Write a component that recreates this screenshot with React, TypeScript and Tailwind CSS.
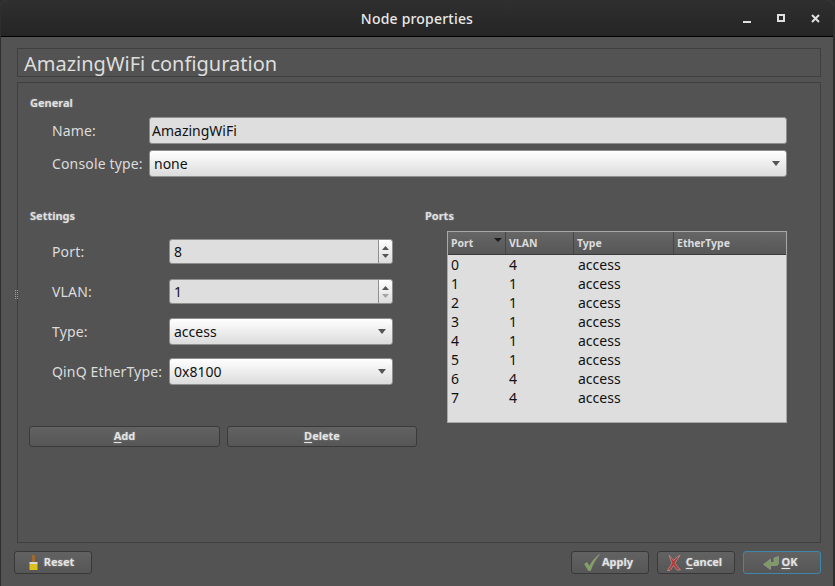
import React from 'react';

const fieldClass = 'flex items-center rounded-[3px] border border-[#8f8f8f] text-[14px] text-[#111]';

function Caret() {
  return (
    <svg width="8" height="5" viewBox="0 0 8 5" className="shrink-0">
      <path d="M0 0h8L4 5z" fill="#555555" />
    </svg>
  );
}

function Combo({ value, className }: { value: string; className: string }) {
  return (
    <div className={`${fieldClass} justify-between bg-gradient-to-b from-white to-[#dcdcdc] pl-[4px] pr-[6px] ${className}`}>
      <span>{value}</span>
      <Caret />
    </div>
  );
}

function Spin({ value, downDisabled }: { value: string; downDisabled?: boolean }) {
  return (
    <div className={`${fieldClass} h-[25px] w-[224px] bg-[#dedede] pl-[4px]`}>
      <span className="flex-1">{value}</span>
      <div className="flex h-full w-[14px] flex-col items-center justify-center gap-[4px] rounded-r-[3px] border-l border-[#8f8f8f] bg-gradient-to-b from-white to-[#dcdcdc]">
        <svg width="7" height="4" viewBox="0 0 7 4"><path d="M3.5 0L7 4H0z" fill="#555555" /></svg>
        <svg width="7" height="4" viewBox="0 0 7 4"><path d="M0 0h7L3.5 4z" fill={downDisabled ? '#a5a5a5' : '#555555'} /></svg>
      </div>
    </div>
  );
}

function Key({ children }: { children: string }) {
  return <span className="underline underline-offset-2">{children}</span>;
}

const btnText = 'text-[11px] font-bold text-[#e4e4e4] [text-shadow:0_0_2px_rgba(255,255,255,0.35)]';

function FootButton({ children, className = 'border-[#383838]' }: { children: React.ReactNode; className?: string }) {
  return (
    <button className={`flex h-[23px] w-[78px] items-center justify-center gap-[2px] rounded-[3px] border bg-gradient-to-b from-[#626262] to-[#565656] pr-[3px] ${btnText} ${className}`}>
      {children}
    </button>
  );
}

const rows = [
  ['0', '4'],
  ['1', '1'],
  ['2', '1'],
  ['3', '1'],
  ['4', '1'],
  ['5', '1'],
  ['6', '4'],
  ['7', '4'],
];

const heading = 'text-[11px] font-bold leading-[14px] text-[#e0e0e0] [text-shadow:0_0_2px_rgba(255,255,255,0.35)]';
const label = 'text-[14px] tracking-[0.15px] text-[#dcdcdc]';
const headCell = 'flex h-full items-center border-r border-[#454545] pl-[3px] pt-[2px] text-[10.5px] font-bold text-[#dcdcdc]';

export default function App() {
  return (
    <div className="h-[586px] w-[835px] overflow-hidden bg-[#2e2e2e] font-['Noto_Sans','Open_Sans',sans-serif]">
      <div className="ml-px mr-[2px] flex h-[586px] flex-col rounded-t-[6px] bg-[#535353]">
        <div className="flex h-[37px] shrink-0 items-center rounded-t-[6px] border-b border-black bg-gradient-to-b from-[#2f2f2f] to-[#252525]">
          <div className="w-[96px]" />
          <div className="flex-1 text-center text-[14px] font-medium tracking-[0.2px] text-[#e8e8e8]">Node properties</div>
          <div className="flex w-[96px] items-center gap-[26px] pl-[6px]">
            <svg width="8" height="9" viewBox="0 0 8 9"><path d="M0 7h8v2H0z" fill="#e0e0e0" /></svg>
            <svg width="8" height="8" viewBox="0 0 8 8"><path d="M0 0h8v8H0zM2 2v4h4V2z" fill="#e0e0e0" fillRule="evenodd" /></svg>
            <svg width="9" height="9" viewBox="0 0 9 9"><path d="M1 1l7 7M8 1L1 8" stroke="#e0e0e0" strokeWidth="2" /></svg>
          </div>
        </div>

        <div className="relative flex flex-1 flex-col pl-[16px] pr-[12px] pt-[11px]">
          <div className="flex h-[29px] items-center border border-[#3f3f3f] pl-[6px] pt-[2px] text-[20px] text-[#dedede]">
            AmazingWiFi configuration
          </div>

          <div className="mt-[5px] h-[461px] border border-[#3f3f3f] pl-[11px] pt-[13px]">
            <div className={`${heading} pl-px`}>General</div>
            <div className="mt-[7px] flex flex-col gap-[6px] pl-px">
              <div className="flex items-center">
                <span className={`${label} w-[119px] pl-[22px]`}>Name:</span>
                <div className={`${fieldClass} h-[27px] w-[638px] bg-[#dedede] pl-[2px]`}>AmazingWiFi</div>
              </div>
              <div className="flex items-center">
                <span className={`${label} w-[119px] whitespace-nowrap pl-[22px]`}>Console type:</span>
                <Combo value="none" className="h-[27px] w-[638px]" />
              </div>
            </div>

            <div className="mt-[32px] flex">
              <div className="w-[396px] shrink-0">
                <div className={`${heading} pl-px`}>Settings</div>
                <div className="mt-[15px] flex flex-col pl-px">
                  <div className="flex items-center pt-px">
                    <span className={`${label} w-[139px] pl-[22px]`}>Port:</span>
                    <Spin value="8" />
                  </div>
                  <div className="mt-[15px] flex items-center">
                    <span className={`${label} w-[139px] pl-[22px]`}>VLAN:</span>
                    <Spin value="1" downDisabled />
                  </div>
                  <div className="mt-[14px] flex items-center">
                    <span className={`${label} w-[139px] pl-[22px]`}>Type:</span>
                    <Combo value="access" className="h-[27px] w-[224px]" />
                  </div>
                  <div className="mt-[13px] flex items-center">
                    <span className={`${label} w-[139px] whitespace-nowrap pl-[22px]`}>QinQ EtherType:</span>
                    <Combo value="0x8100" className="h-[27px] w-[224px]" />
                  </div>
                </div>
                <div className="mt-[41px] flex gap-[7px]">
                  <button className={`h-[21px] w-[191px] rounded-[3px] border border-[#3a3a3a] bg-gradient-to-b from-[#626262] to-[#565656] ${btnText}`}><Key>A</Key>dd</button>
                  <button className={`h-[21px] w-[190px] rounded-[3px] border border-[#3a3a3a] bg-gradient-to-b from-[#626262] to-[#565656] ${btnText}`}><Key>D</Key>elete</button>
                </div>
              </div>

              <div className="flex-1">
                <div className={heading}>Ports</div>
                <div className="ml-[22px] mt-[8px] h-[192px] w-[340px] border border-[#a8a8a8] bg-[#dedede]">
                  <div className="flex h-[23px] items-center border-b border-[#3a3a3a] bg-gradient-to-b from-[#666666] to-[#575757]">
                    <div className={`${headCell} w-[58px] justify-between pr-[3px]`}>
                      <span>Port</span>
                      <svg width="8" height="6" viewBox="0 0 8 6" className="mb-[8px]"><path d="M0 1h8L4 5z" fill="#1c1c1c" /></svg>
                    </div>
                    <div className={`${headCell} w-[68px]`}>VLAN</div>
                    <div className={`${headCell} w-[100px]`}>Type</div>
                    <div className={`${headCell} flex-1 border-r-0`}>EtherType</div>
                  </div>
                  <div>
                    {rows.map(([port, vlan]) => (
                      <div key={port} className="flex h-[19px] items-center text-[14px] text-[#111]">
                        <span className="w-[58px] pl-[3px]">{port}</span>
                        <span className="w-[68px] pl-[3px]">{vlan}</span>
                        <span className="pl-[4px]">access</span>
                      </div>
                    ))}
                  </div>
                </div>
              </div>
            </div>
          </div>

          <div className="absolute left-[14px] top-[253px] grid grid-cols-2 gap-[1px]">
            {Array.from({ length: 10 }).map((_, i) => (
              <span key={i} className="h-px w-px bg-[#a0a0a0]" />
            ))}
          </div>

          <div className="-ml-[3px] mt-[8px] flex items-center justify-between">
            <FootButton>
              <svg width="9" height="16" viewBox="0 0 9 16" className="mr-[4px]">
                <rect x="3" y="0" width="3" height="8" fill="#9c6a2c" />
                <rect x="0.5" y="7" width="8" height="2" fill="#d8d8d8" />
                <path d="M0.5 9h8v6h-8z" fill="#dcc01e" />
              </svg>
              <span>Reset</span>
            </FootButton>
            <div className="flex gap-[8px]">
              <FootButton>
                <svg width="16" height="17" viewBox="0 0 16 17">
                  <path d="M0.5 10l2.5-1.5 2.5 4C7.5 8 11 3.5 15.5 0.5 11.5 5 8.5 10.5 6.5 16.5H4.5z" fill="#7fa05f" stroke="#a9b99b" strokeWidth="0.4" />
                </svg>
                <span>Apply</span>
              </FootButton>
              <FootButton>
                <svg width="14" height="16" viewBox="0 0 14 16" className="mr-[3px]">
                  <path d="M2 0.5c2 1.5 3.5 3.5 4.5 5C8 3.5 10 1.5 13 0.5 11 3 9.5 5.5 8 8c1.5 2.5 3.5 5 5.5 7h-3.5L6.5 10.5 3 15.5H0.5L5 8C4 5.5 3 3 2 0.5z" fill="#b03a3a" stroke="#d9b9b9" strokeWidth="0.5" />
                </svg>
                <span><Key>C</Key>ancel</span>
              </FootButton>
              <FootButton className="border-[#3f86ad] from-[#5b636a] to-[#545c62]">
                <svg width="16" height="16" viewBox="0 0 16 16">
                  <path d="M15.5 1.5v6.5c0 1.5-1 2.5-2.5 2.5H7.5v4L0.5 9.5 7.5 4v3.5h3.5V3z" fill="#7d9a63" stroke="#a8a8a8" strokeWidth="0.5" />
                </svg>
                <span><Key>O</Key>K</span>
              </FootButton>
            </div>
          </div>
        </div>
      </div>
    </div>
  );
}
